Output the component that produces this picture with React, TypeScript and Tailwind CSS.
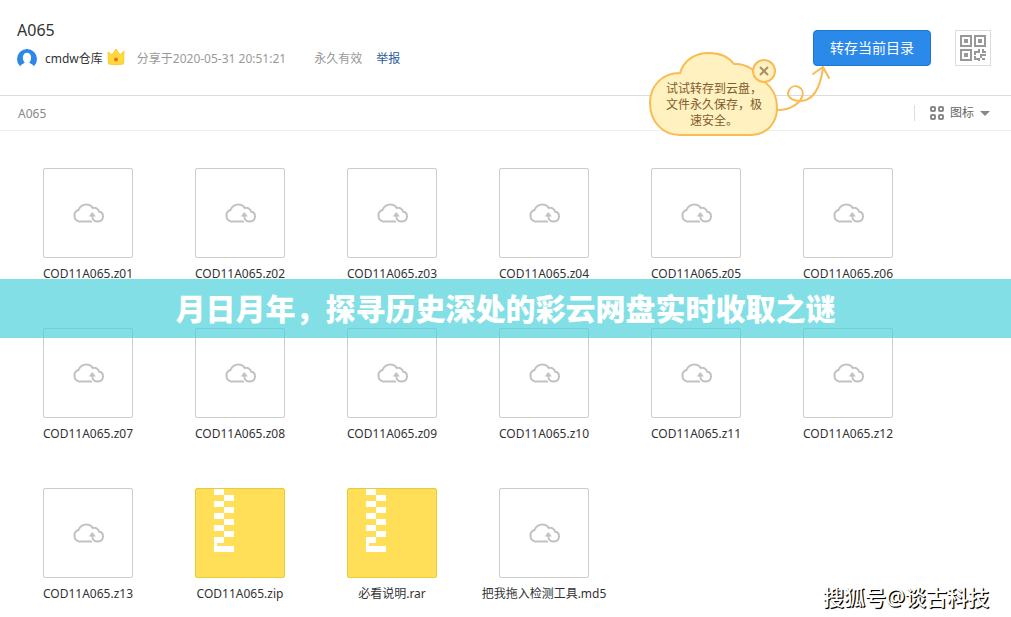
const files = [
  { name: "COD11A065.z01", type: "file" },
  { name: "COD11A065.z02", type: "file" },
  { name: "COD11A065.z03", type: "file" },
  { name: "COD11A065.z04", type: "file" },
  { name: "COD11A065.z05", type: "file" },
  { name: "COD11A065.z06", type: "file" },
  { name: "COD11A065.z07", type: "file" },
  { name: "COD11A065.z08", type: "file" },
  { name: "COD11A065.z09", type: "file" },
  { name: "COD11A065.z10", type: "file" },
  { name: "COD11A065.z11", type: "file" },
  { name: "COD11A065.z12", type: "file" },
  { name: "COD11A065.z13", type: "file" },
  { name: "COD11A065.zip", type: "zip" },
  { name: "必看说明.rar", type: "zip" },
  { name: "把我拖入检测工具.md5", type: "file" },
];

const CloudIcon = () => (
  <svg width="32" height="20" viewBox="0 0 32 20" fill="none" stroke="#c2c2c2" strokeWidth="2" aria-hidden="true">
    <path d="M20 18.500H7A6 6 0 0 1 6.500 7C8 3.200 11 1.500 14.500 1.500C17.500 1.500 19.500 2.800 20.700 5C24 4.300 26.500 5.900 27 8.500C29.500 9.100 31 11 31 13.200C31 16.200 29 18.500 25.700 18.500C22.500 18.500 20.300 16.200 20.300 13" />
    <path d="M16.800 13.500L20.300 9L23.800 13.500Z" fill="#c2c2c2" stroke="none" />
  </svg>
);

const ZipIcon = () => (
  <svg className="ml-[18px]" width="20" height="63" viewBox="0 0 20 63" fill="#fff" shapeRendering="crispEdges" aria-hidden="true">
    {[0, 12, 24, 36, 48].map((y) => (
      <rect key={y} x="0" y={y} width="10" height="6" />
    ))}
    {[6, 18, 30, 42].map((y) => (
      <rect key={y} x="10" y={y} width="10" height="6" />
    ))}
    <path d="M0 54h3v3h17v6H0z" />
  </svg>
);

const QrIcon = () => (
  <svg width="26" height="26" viewBox="0 0 26 26" fill="none" stroke="#989898" strokeWidth="2" aria-hidden="true">
    <path d="M1 1h10v10H1zM15 1h10v10H15zM1 15h10v10H1z" />
    <path d="M4 4h4v4H4zM18 4h4v4h-4zM4 18h4v4H4zM18 14h2v4h-4v2h-2v-4h4zM22 14h2v2h2v2h-4zM20 19h6v2h-4v2h-2zM14 21h2v2h4v3h-2v-1h-4zM22 23h3v2h-3z" fill="#989898" stroke="none" />
  </svg>
);

const GridIcon = () => (
  <svg width="14" height="14" viewBox="0 0 14 14" fill="none" stroke="#888" strokeWidth="2" aria-hidden="true">
    <rect x="1" y="1" width="4" height="4" rx="1" />
    <rect x="9" y="1" width="4" height="4" rx="1" />
    <rect x="1" y="9" width="4" height="4" rx="1" />
    <rect x="9" y="9" width="4" height="4" rx="1" />
  </svg>
);

const SaveTip = () => (
  <div className="absolute top-[21px] right-[99px] h-[88px] w-[184px]">
    <svg className="absolute inset-0" width="184" height="88" viewBox="0 0 184 88" fill="none" stroke="#f9bc55" strokeWidth="2" aria-hidden="true">
      <path d="M32 84H102C118 84 129 73 129 57C129 45 124 36 115 30C109 20 98 12 86 13C80 5 71 2 61 2C47 2 36 9 32 22C14 22 2 35 2 52C2 71 15 84 32 84Z" fill="#fff1c0" />
      <circle cx="116" cy="20" r="11" fill="#fff1c0" />
      <path d="M112 16l8 8M120 16l-8 8" stroke="#a98f68" />
      <path d="M130 59C142 59 151 53 154 46C158 37 146 31 141 39C137 47 147 52 158 49C169 45 173 31 175 17M165 23L175 16L181 27" strokeLinecap="round" />
    </svg>
    <p className="relative mr-[62px] pt-[30px] pl-[10px] text-center text-xs leading-4 text-[#7f5c2d]">
      试试转存到云盘，<br />文件永久保存，极<br />速安全。
    </p>
    <button type="button" aria-label="关闭" className="absolute top-[9px] right-[57px] size-[22px] rounded-full" />
  </div>
);

const Header = () => (
  <header className="flex h-24 items-start justify-between border-b border-[#d9dde1] pr-5 pl-[17px]">
    <div className="pt-5">
      <h1 className="text-base leading-5">A065</h1>
      <div className="mt-2 flex items-center leading-5">
        <svg width="20" height="20" viewBox="0 0 20 20" aria-hidden="true">
          <circle cx="10" cy="10" r="10" fill="#2b87ea" />
          <path d="M3 17C5 14.800 6.500 14.800 7.800 13.500C4.500 10.500 5.500 3.800 10 3.800C14.500 3.800 15.500 10.500 12.200 13.500C13.500 14.800 15 14.800 17 17L14 20H6Z" fill="#fff" />
        </svg>
        <span className="ml-2 pt-[1px]">cmdw仓库</span>
        <svg className="ml-1 -mt-1" width="18" height="18" viewBox="0 0 18 18" aria-hidden="true">
          <path d="M1 4L5 7L9 1L13 7L17 3L16.500 16Q9 17.500 1.500 16Z" fill="#ffd83b" stroke="#fbcb3a" strokeWidth="1" />
          <circle cx="9" cy="11.500" r="2" fill="#ed6b1f" />
        </svg>
        <span className="ml-3 pt-[1px] text-[#999]">分享于2020-05-31 20:51:21</span>
        <span className="ml-7 pt-[1px] text-[#999]">永久有效</span>
        <a href="#report" className="ml-[14px] pt-[1px] text-[#2a5b9c]">举报</a>
      </div>
    </div>
    <div className="flex gap-6 pt-[30px]">
      <div className="relative">
        <button type="button" className="h-9 rounded-[4px] border border-[#1b75d6] bg-[#2b89ea] px-4 text-sm whitespace-nowrap text-white">
          转存当前目录
        </button>
        <SaveTip />
      </div>
      <button type="button" aria-label="二维码" className="flex size-9 items-center justify-center border border-[#dcdcdc]">
        <QrIcon />
      </button>
    </div>
  </header>
);

const Toolbar = () => (
  <div className="flex h-[35px] items-center justify-between border-b border-[#eee] pr-5 pl-[18px] text-[#888]">
    <nav className="pt-[1px]">A065</nav>
    <button type="button" className="flex items-center border-l border-[#ddd] pr-[1px] pl-[15px]">
      <GridIcon />
      <span className="ml-[6px] text-[#666]">图标</span>
      <svg className="ml-[6px]" width="10" height="5" viewBox="0 0 10 5" fill="#888" aria-hidden="true">
        <path d="M0 0H10L5 5Z" />
      </svg>
    </button>
  </div>
);

export default function App() {
  return (
    <div className="relative min-h-screen bg-white font-['Noto_Sans','Noto_Sans_CJK_SC',sans-serif] text-xs text-[#333]">
      <Header />
      <Toolbar />
      <main className="relative px-3 pt-[37px]">
        <ul className="flex flex-wrap gap-y-11">
          {files.map((file) => (
            <li key={file.name} className="flex w-[152px] flex-col items-center">
              {file.type === "zip" ? (
                <div className="size-[90px] rounded-[2px] border border-[#ebca37] bg-[#ffdf57]">
                  <ZipIcon />
                </div>
              ) : (
                <div className="flex size-[90px] items-center justify-center rounded-[2px] border border-[#ccc]">
                  <CloudIcon />
                </div>
              )}
              <span className="mt-[6px] leading-5 whitespace-nowrap">{file.name}</span>
            </li>
          ))}
        </ul>
        {/* Title banner over the list */}
        <div className="absolute inset-x-0 top-[148px] flex h-[59px] items-center justify-center bg-[#4ed1db]/70">
          <h2 className="text-3xl font-black whitespace-nowrap text-white">
            月日月年，探寻历史深处的彩云网盘实时收取之谜
          </h2>
        </div>
      </main>
      <p className="absolute right-[22px] bottom-1 text-[21px] leading-8 font-medium text-white [text-shadow:1px_1px_0_#000,1px_1px_1px_#000]">
        搜狐号@谈古科技
      </p>
    </div>
  );
}
